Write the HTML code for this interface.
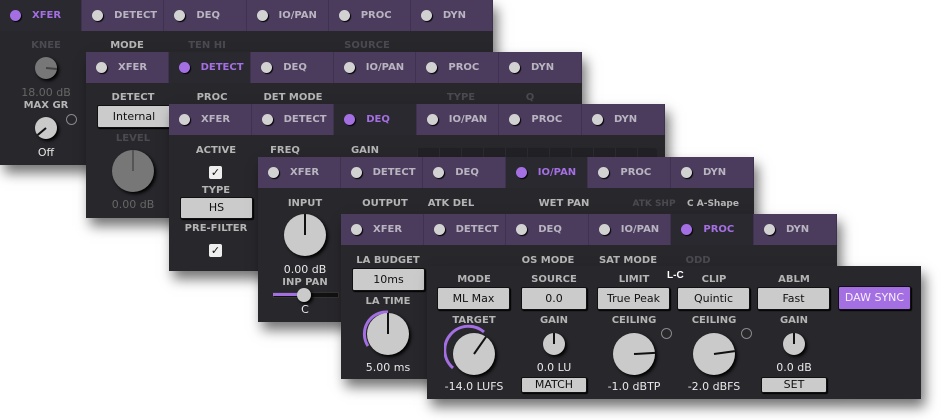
<!DOCTYPE html><html><head><style>
body{margin:0;width:941px;height:420px;background:#fff;overflow:hidden;position:relative;font-family:"DejaVu Sans","Liberation Sans",sans-serif}
.p{position:absolute;width:496px;background:#28272c;box-shadow:4px 8px 12px rgba(0,0,0,.55);overflow:hidden}
.tb{position:absolute;left:0;top:0;width:100%;height:31px;background:#4b3c5e;display:flex}
.tab{width:82.6px;height:31px;box-sizing:border-box;border-right:1px solid #3e3250;position:relative;color:#b9b5c0;font-weight:bold;font-size:10px;line-height:31px}
.tab i{position:absolute;left:10px;top:10px;width:11px;height:11px;border-radius:50%;background:#d2d2d2;box-shadow:1px 1px 1px #000}
.tab span{position:absolute;left:32px}
.tab.a{background:#2b2930;color:#a46fe3}.tab.a i{background:#a46fe3}
.l{position:absolute;width:120px;margin-left:-60px;text-align:center;font-weight:bold;font-size:10px;color:#b5b5b5;line-height:13px}
.d{color:#4a4a50}
.v{position:absolute;width:120px;margin-left:-60px;text-align:center;font-size:11px;color:#e8e8e8;line-height:13px}
.b{position:absolute;background:#cbcbcb;border:1px solid #111;border-radius:2px;color:#111;font-size:11px;text-align:center;box-sizing:border-box;box-shadow:1px 1px 1px #000}
.k{position:absolute;border-radius:50%;background:#cacaca;box-shadow:2px 2px 3px #000}
.k b{position:absolute;left:50%;top:0;width:2px;margin-left:-1px;height:50%;background:#111;transform-origin:50% 100%}
.r{position:absolute;width:9px;height:9px;border:1px solid #888;border-radius:50%}
.cb{position:absolute;width:13px;height:13px;background:#eee;border-radius:2px;color:#111;font-size:11px;line-height:13px;text-align:center;font-weight:bold}
</style></head><body>

<!-- P1 -->
<div class="p" style="left:0;top:0;height:165px;width:493px">
<div class="tb"><div class="tab a"><i></i><span>XFER</span></div><div class="tab"><i></i><span>DETECT</span></div><div class="tab"><i></i><span>DEQ</span></div><div class="tab"><i></i><span>IO/PAN</span></div><div class="tab"><i></i><span>PROC</span></div><div class="tab"><i></i><span>DYN</span></div></div>
<div class="l d" style="left:46px;top:39px">KNEE</div>
<div class="k" style="left:35px;top:57px;width:22px;height:22px;background:#777"><b style="transform:rotate(95deg);background:#444"></b></div>
<div class="v" style="left:46px;top:86px;color:#666">18.00 dB</div>
<div class="l" style="left:46px;top:99px">MAX GR</div>
<div class="k" style="left:35px;top:117px;width:22px;height:22px"><b style="transform:rotate(-130deg)"></b></div>
<div class="r" style="left:66px;top:114px"></div>
<div class="v" style="left:46px;top:146px">Off</div>
<div class="l" style="left:127px;top:39px">MODE</div>
<div class="l d" style="left:207px;top:39px">TEN HI</div>
<div class="l d" style="left:367px;top:39px">SOURCE</div>
</div>

<!-- P2 -->
<div class="p" style="left:86px;top:52px;height:166px">
<div class="tb"><div class="tab"><i></i><span>XFER</span></div><div class="tab a"><i></i><span>DETECT</span></div><div class="tab"><i></i><span>DEQ</span></div><div class="tab"><i></i><span>IO/PAN</span></div><div class="tab"><i></i><span>PROC</span></div><div class="tab"><i></i><span>DYN</span></div></div>
<div class="l" style="left:47px;top:39px">DETECT</div>
<div class="b" style="left:11px;top:53px;width:74px;height:23px;line-height:21px">Internal</div>
<div class="l d" style="left:47px;top:80px">LEVEL</div>
<div class="k" style="left:26px;top:98px;width:42px;height:42px;background:#777"><b style="background:#555"></b></div>
<div class="v" style="left:47px;top:146px;color:#666">0.00 dB</div>
<div class="l" style="left:126px;top:39px">PROC</div>
<div class="l" style="left:207px;top:39px">DET MODE</div>
<div class="l d" style="left:375px;top:39px">TYPE</div>
<div class="l d" style="left:444px;top:39px">Q</div>
</div>

<!-- P3 -->
<div class="p" style="left:169px;top:104px;height:167px">
<div class="tb"><div class="tab"><i></i><span>XFER</span></div><div class="tab"><i></i><span>DETECT</span></div><div class="tab a"><i></i><span>DEQ</span></div><div class="tab"><i></i><span>IO/PAN</span></div><div class="tab"><i></i><span>PROC</span></div><div class="tab"><i></i><span>DYN</span></div></div>
<div class="l" style="left:47px;top:40px">ACTIVE</div>
<div class="cb" style="left:40px;top:62px">✓</div>
<div class="l" style="left:47px;top:80px">TYPE</div>
<div class="b" style="left:11px;top:93px;width:73px;height:22px;line-height:20px">HS</div>
<div class="l" style="left:47px;top:118px">PRE-FILTER</div>
<div class="cb" style="left:40px;top:140px">✓</div>
<div class="l" style="left:116px;top:40px">FREQ</div>
<div class="l" style="left:196px;top:40px">GAIN</div>
<div style="position:absolute;left:248px;top:44px;width:240px;height:100px;background:#222126;border-radius:3px;background-image:linear-gradient(90deg,#2c2b30 1px,transparent 1px);background-size:22px 100%"></div>
</div>

<!-- P4 -->
<div class="p" style="left:258px;top:157px;height:165px">
<div class="tb"><div class="tab"><i></i><span>XFER</span></div><div class="tab"><i></i><span>DETECT</span></div><div class="tab"><i></i><span>DEQ</span></div><div class="tab a"><i></i><span>IO/PAN</span></div><div class="tab"><i></i><span>PROC</span></div><div class="tab"><i></i><span>DYN</span></div></div>
<div class="l" style="left:47px;top:40px">INPUT</div>
<div class="k" style="left:26px;top:57px;width:42px;height:42px"><b></b></div>
<div class="v" style="left:47px;top:106px">0.00 dB</div>
<div class="l" style="left:47px;top:119px">INP PAN</div>
<div style="position:absolute;left:15px;top:135px;width:64px;height:4px;background:#111;border:1px solid #333"></div>
<div style="position:absolute;left:15px;top:136px;width:32px;height:3px;background:#a46fe3"></div>
<div class="k" style="left:39px;top:131px;width:14px;height:14px"></div>
<div class="v" style="left:47px;top:146px">C</div>
<div class="l" style="left:127px;top:40px">OUTPUT</div>
<div class="l" style="left:193px;top:40px">ATK DEL</div>
<div class="l" style="left:306px;top:40px">WET PAN</div>
<div class="l d" style="left:396px;top:41px;font-size:9px">ATK SHP</div>
<div class="l" style="left:455px;top:41px;font-size:9px">C A-Shape</div>
</div>

<!-- P5 -->
<div class="p" style="left:341px;top:214px;height:165px">
<div class="tb"><div class="tab"><i></i><span>XFER</span></div><div class="tab"><i></i><span>DETECT</span></div><div class="tab"><i></i><span>DEQ</span></div><div class="tab"><i></i><span>IO/PAN</span></div><div class="tab a"><i></i><span>PROC</span></div><div class="tab"><i></i><span>DYN</span></div></div>
<div class="l" style="left:47px;top:40px">LA BUDGET</div>
<div class="b" style="left:11px;top:54px;width:73px;height:23px;line-height:21px">10ms</div>
<div class="l" style="left:47px;top:81px">LA TIME</div>
<svg style="position:absolute;left:17px;top:90px" width="60" height="60"><path d="M10 42 A22 22 0 0 1 30 8" fill="none" stroke="#a46fe3" stroke-width="3"/></svg>
<div class="k" style="left:26px;top:99px;width:42px;height:42px"><b></b></div>
<div class="v" style="left:47px;top:147px">5.00 ms</div>
<div class="l" style="left:207px;top:40px">OS MODE</div>
<div class="l" style="left:287px;top:40px">SAT MODE</div>
<div class="l d" style="left:357px;top:40px">ODD</div>
</div>

<!-- P6 -->
<div class="p" style="left:427px;top:266px;width:494px;height:133px">
<div style="position:absolute;left:240px;top:4px;color:#fff;font-weight:bold;font-size:10px;font-family:'Liberation Sans',sans-serif">L-C</div>
<div class="l" style="left:47px;top:7px">MODE</div>
<div class="l" style="left:127px;top:7px">SOURCE</div>
<div class="l" style="left:207px;top:7px">LIMIT</div>
<div class="l" style="left:287px;top:7px">CLIP</div>
<div class="l" style="left:367px;top:7px">ABLM</div>
<div class="b" style="left:10px;top:21px;width:73px;height:23px;line-height:21px">ML Max</div>
<div class="b" style="left:94px;top:21px;width:66px;height:23px;line-height:21px">0.0</div>
<div class="b" style="left:170px;top:21px;width:73px;height:23px;line-height:21px">True Peak</div>
<div class="b" style="left:250px;top:21px;width:73px;height:23px;line-height:21px">Quintic</div>
<div class="b" style="left:330px;top:21px;width:73px;height:23px;line-height:21px">Fast</div>
<div class="b" style="left:411px;top:20px;width:73px;height:24px;line-height:22px;background:#a46fe3;color:#f4eefc">DAW SYNC</div>
<div class="l" style="left:47px;top:48px">TARGET</div>
<div class="l" style="left:127px;top:48px">GAIN</div>
<div class="l" style="left:207px;top:48px">CEILING</div>
<div class="l" style="left:287px;top:48px">CEILING</div>
<div class="l" style="left:367px;top:48px">GAIN</div>
<svg style="position:absolute;left:17px;top:57px" width="60" height="60"><path d="M9 45 A23 23 0 0 1 40 9" fill="none" stroke="#a46fe3" stroke-width="3"/></svg>
<div class="k" style="left:26px;top:67px;width:42px;height:42px"><b style="transform:rotate(35deg)"></b></div>
<div class="v" style="left:47px;top:114px">-14.0 LUFS</div>
<div class="k" style="left:116px;top:67px;width:22px;height:22px"><b></b></div>
<div class="v" style="left:127px;top:95px">0.0 LU</div>
<div class="b" style="left:94px;top:111px;width:66px;height:16px;line-height:14px">MATCH</div>
<div class="k" style="left:186px;top:67px;width:42px;height:42px"><b style="transform:rotate(87deg)"></b></div>
<div class="r" style="left:234px;top:62px"></div>
<div class="v" style="left:207px;top:114px">-1.0 dBTP</div>
<div class="k" style="left:266px;top:67px;width:42px;height:42px"><b style="transform:rotate(82deg)"></b></div>
<div class="r" style="left:314px;top:62px"></div>
<div class="v" style="left:287px;top:114px">-2.0 dBFS</div>
<div class="k" style="left:356px;top:67px;width:22px;height:22px"><b></b></div>
<div class="v" style="left:367px;top:95px">0.0 dB</div>
<div class="b" style="left:334px;top:111px;width:66px;height:16px;line-height:14px">SET</div>
</div>
</body></html>
